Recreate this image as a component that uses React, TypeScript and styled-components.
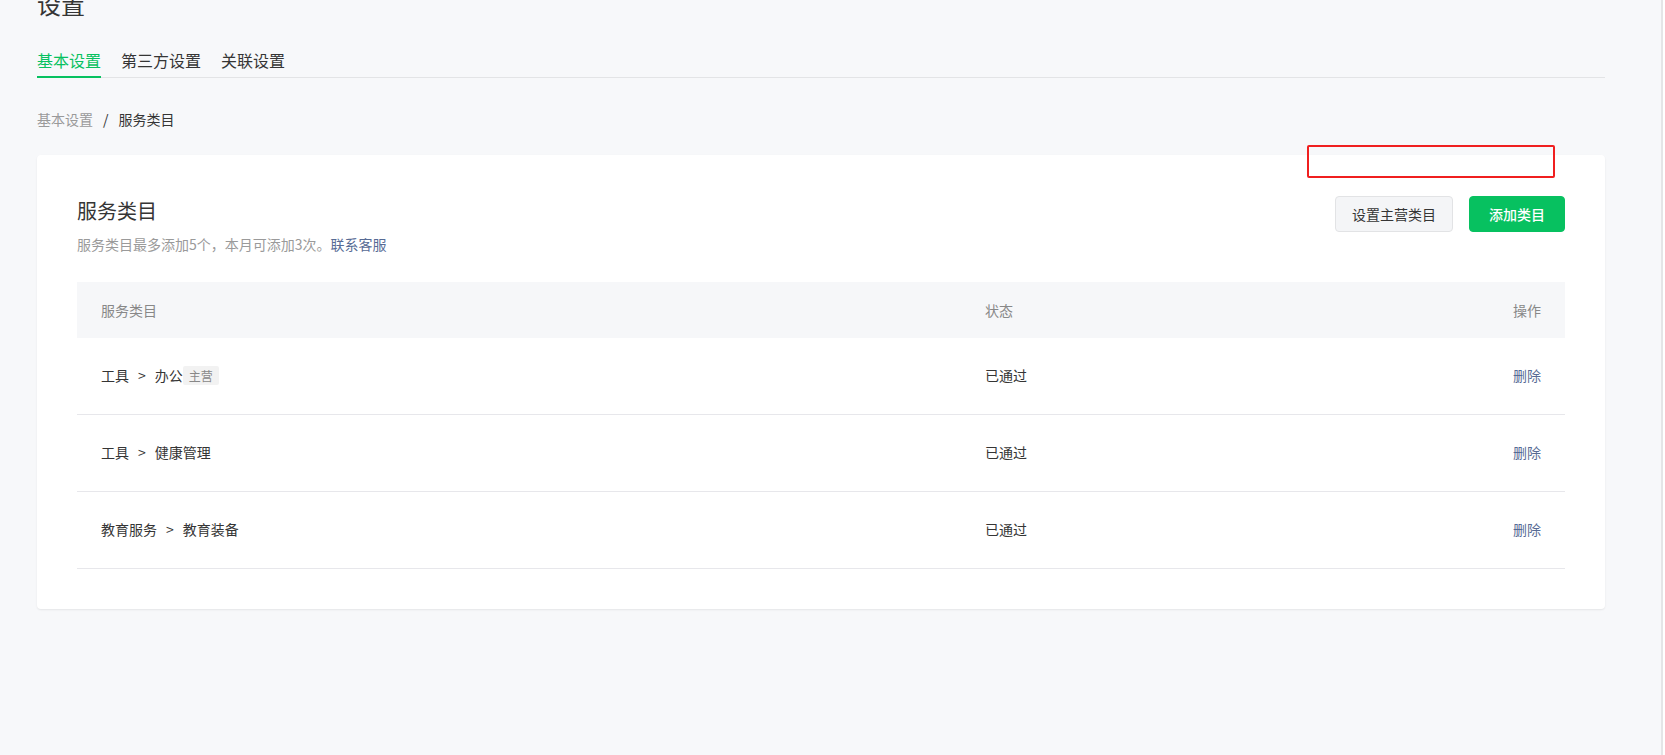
import React from "react";
import styled, { createGlobalStyle } from "styled-components";

const GlobalStyle = createGlobalStyle`
  html, body {
    margin: 0;
    padding: 0;
    background: #f7f8fa;
    font-family: "Noto Sans CJK SC", "Noto Sans", sans-serif;
    color: #353535;
  }
  * { box-sizing: border-box; }
`;

type Category = {
  path: string[];
  main?: boolean;
  status: string;
};

const categories: Category[] = [
  { path: ["工具", "办公"], main: true, status: "已通过" },
  { path: ["工具", "健康管理"], status: "已通过" },
  { path: ["教育服务", "教育装备"], status: "已通过" },
];

const tabs = ["基本设置", "第三方设置", "关联设置"];

function App() {
  return (
    <Shell>
      <GlobalStyle />
      <Main>
        <PageTitle>设置</PageTitle>
        <TabBar>
          {tabs.map((t, i) => (
            <Tab key={t} active={i === 0}>
              {t}
            </Tab>
          ))}
        </TabBar>
        <Crumbs>
          <CrumbLink>基本设置</CrumbLink>
          <CrumbSep>/</CrumbSep>
          <CrumbCurrent>服务类目</CrumbCurrent>
        </Crumbs>
        <Card>
          <Marker />
          <CardHead>
            <HeadText>
              <CardTitle>服务类目</CardTitle>
              <CardDesc>
                服务类目最多添加5个，本月可添加3次。<Link>联系客服</Link>
              </CardDesc>
            </HeadText>
            <Actions>
              <Button>设置主营类目</Button>
              <Button primary>添加类目</Button>
            </Actions>
          </CardHead>
          <Table>
            <HeadRow>
              <HeadCell>服务类目</HeadCell>
              <HeadCell>状态</HeadCell>
              <HeadCell>操作</HeadCell>
            </HeadRow>
            {categories.map((c) => (
              <Row key={c.path.join("-")}>
                <Cell>
                  {c.path[0]}
                  <Arrow>&gt;</Arrow>
                  {c.path[1]}
                  {c.main && <Tag>主营</Tag>}
                </Cell>
                <Cell>{c.status}</Cell>
                <Cell>
                  <Link>删除</Link>
                </Cell>
              </Row>
            ))}
          </Table>
        </Card>
      </Main>
      <Rail />
    </Shell>
  );
}

const Shell = styled.div`
  display: flex;
  height: 100vh;
  overflow: hidden;
`;
const Main = styled.div`
  flex: 1;
  padding: 0 56px 0 37px;
`;
const Rail = styled.div`
  width: 4px;
  border-left: 2px solid #e4e5e7;
  background: #ffffff;
`;
const PageTitle = styled.h1`
  margin: -12px 0 0;
  font-size: 24px;
  line-height: 32px;
  font-weight: 400;
  color: #353535;
`;
const TabBar = styled.div`
  display: flex;
  gap: 20px;
  margin-top: 28px;
  border-bottom: 1px solid #e3e4e6;
`;
const Tab = styled.div<{ active?: boolean }>`
  font-size: 16px;
  line-height: 24px;
  padding-bottom: 4px;
  margin-bottom: -1px;
  color: ${(p) => (p.active ? "#07c160" : "#353535")};
  border-bottom: 2px solid ${(p) => (p.active ? "#07c160" : "transparent")};
  cursor: pointer;
`;
const Crumbs = styled.div`
  display: flex;
  align-items: center;
  margin-top: 31px;
  font-size: 14px;
  line-height: 20px;
`;
const CrumbLink = styled.span`
  color: #9a9a9a;
`;
const CrumbSep = styled.span`
  margin: 0 10px;
  color: #353535;
`;
const CrumbCurrent = styled.span`
  color: #353535;
`;
const Card = styled.div`
  position: relative;
  margin-top: 26px;
  background: #ffffff;
  border-radius: 4px;
  box-shadow: 0 1px 2px rgba(0, 0, 0, 0.08);
  padding: 40px;
`;
const Marker = styled.div`
  position: absolute;
  top: -10px;
  right: 50px;
  width: 248px;
  height: 33px;
  border: 2px solid #f01f1f;
  border-radius: 2px;
`;
const CardHead = styled.div`
  display: flex;
  justify-content: space-between;
  align-items: flex-start;
`;
const HeadText = styled.div`
  display: flex;
  flex-direction: column;
`;
const CardTitle = styled.h2`
  margin: 0;
  font-size: 20px;
  line-height: 32px;
  font-weight: 400;
  color: #353535;
`;
const CardDesc = styled.p`
  margin: 7px 0 0;
  font-size: 14px;
  line-height: 20px;
  color: #9a9a9a;
`;
const Link = styled.a`
  color: #576b95;
  cursor: pointer;
`;
const Actions = styled.div`
  display: flex;
  gap: 16px;
  padding-top: 1px;
`;
const Button = styled.button<{ primary?: boolean }>`
  height: 36px;
  padding: ${(p) => (p.primary ? "0 19px" : "0 16px")};
  border-radius: 4px;
  font-family: inherit;
  font-size: 14px;
  font-weight: ${(p) => (p.primary ? 500 : 400)};
  cursor: pointer;
  color: ${(p) => (p.primary ? "#ffffff" : "#353535")};
  background: ${(p) => (p.primary ? "#07c160" : "#f4f5f7")};
  border: 1px solid ${(p) => (p.primary ? "#07c160" : "#e2e3e5")};
`;
const Table = styled.div`
  margin-top: 28px;
`;
const Grid = styled.div`
  display: grid;
  grid-template-columns: 884px 1fr auto;
  align-items: center;
  padding: 0 24px;
  font-size: 14px;
`;
const HeadRow = styled(Grid)`
  height: 56px;
  background: #f6f7f9;
  color: #888888;
`;
const HeadCell = styled.div``;
const Row = styled(Grid)`
  height: 77px;
  padding-bottom: 2px;
  border-bottom: 1px solid #e7e7eb;
  color: #353535;
`;
const Cell = styled.div`
  display: flex;
  align-items: center;
`;
const Arrow = styled.span`
  margin: 0 9px;
`;
const Tag = styled.span`
  padding: 0 6px;
  font-size: 12px;
  line-height: 19px;
  color: #888888;
  background: #f2f2f2;
  border-radius: 2px;
`;

export default App;
